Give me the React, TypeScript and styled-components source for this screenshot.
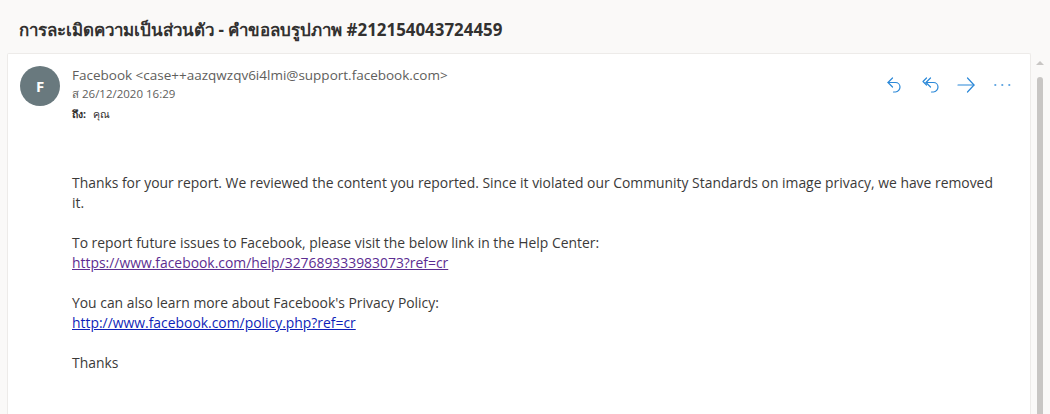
import React from "react";
import styled, { createGlobalStyle } from "styled-components";

const GlobalStyle = createGlobalStyle`
  html, body {
    margin: 0;
    padding: 0;
    height: 414px;
    overflow: hidden;
    background: #faf9f8;
  }
  body {
    font-family: "Open Sans", "Noto Sans", "Liberation Sans", sans-serif;
  }
`;

const Page = styled.div`
  width: 1050px;
  height: 414px;
  display: flex;
  flex-direction: column;
  overflow: hidden;
`;

const SubjectBar = styled.div`
  height: 53px;
  flex: none;
  display: flex;
  align-items: center;
  padding: 7px 0 0 19px;
  box-sizing: border-box;
  font-size: 16.9px;
  font-weight: 700;
  color: #323130;
`;

const Main = styled.div`
  flex: 1;
  display: flex;
  min-height: 0;
  padding-left: 7px;
`;

const Card = styled.div`
  width: 1024px;
  flex: none;
  box-sizing: border-box;
  background: #fff;
  border: 1px solid #edebe9;
  border-bottom: none;
  border-radius: 2px 2px 0 0;
  padding: 12px 0 0 12px;
`;

const Head = styled.div`
  display: flex;
  align-items: flex-start;
`;

const Avatar = styled.div`
  width: 40px;
  height: 40px;
  flex: none;
  border-radius: 50%;
  background: #69797e;
  color: #fff;
  font-size: 15px;
  font-weight: 700;
  display: flex;
  align-items: center;
  justify-content: center;
`;

const Meta = styled.div`
  flex: 1;
  margin-left: 12px;
  margin-top: -1px;
  color: #605e5c;
`;

const Sender = styled.div`
  font-size: 13.5px;
  line-height: 20px;
`;

const DateLine = styled.div`
  font-size: 11.5px;
  line-height: 17px;
`;

const ToLine = styled.div`
  font-size: 10.5px;
  line-height: 24px;
  color: #323130;
  display: flex;
  gap: 7px;
  b {
    font-weight: 700;
  }
`;

const Actions = styled.div`
  display: flex;
  gap: 14px;
  margin: 8px 18px 0 0;
`;

const ActionIcon = styled.svg`
  width: 22px;
  height: 22px;
  fill: none;
  stroke: #2b88d8;
  stroke-width: 1.2;
  stroke-linecap: round;
  stroke-linejoin: round;
`;

const Body = styled.div`
  margin: 47px 29px 0 52px;
  font-size: 13.9px;
  line-height: 20px;
  color: #3b3a39;
`;

const Para = styled.p`
  margin: 0 0 20px;
`;

const MailLink = styled.a<{ $visited?: boolean }>`
  color: ${(p) => (p.$visited ? "#5c2d91" : "#0f1fb8")};
  text-decoration: underline;
`;

const ScrollTrack = styled.div`
  flex: 1;
  display: flex;
  flex-direction: column;
  align-items: center;
  padding-top: 8px;
`;

const ScrollArrow = styled.div`
  width: 0;
  height: 0;
  border-left: 4px solid transparent;
  border-right: 4px solid transparent;
  border-bottom: 4px solid #c8c6c4;
  margin-left: -1px;
`;

const ScrollThumb = styled.div`
  flex: 1;
  width: 6px;
  margin-top: 12px;
  margin-left: -1px;
  background: #c8c6c4;
  border-radius: 3px 3px 0 0;
`;

function ReplyIcon() {
  return (
    <ActionIcon viewBox="0 0 22 22">
      <path d="M10.5 4 L6 8.5 L10.5 13" />
      <path d="M6 8.5 H13.5 C16 8.5 18 10.5 18 13 C18 15.5 16 18 13.5 18 H11.5" />
    </ActionIcon>
  );
}

function ReplyAllIcon() {
  return (
    <ActionIcon viewBox="0 0 22 22">
      <path d="M8.5 4 L5 7.5 L8.5 11" />
      <path d="M12.5 4 L8 8.5 L12.5 13" />
      <path d="M8 8.5 H15.5 C18 8.5 20 10.5 20 13 C20 15.5 18 18 15.5 18 H13.5" />
    </ActionIcon>
  );
}

function ForwardIcon() {
  return (
    <ActionIcon viewBox="0 0 22 22">
      <path d="M4 11 H20" />
      <path d="M13.5 4 L20 11 L13.5 18" />
    </ActionIcon>
  );
}

function MoreIcon() {
  return (
    <ActionIcon viewBox="0 0 22 22">
      <path d="M5 11 h.6 M12 11 h.6 M19 11 h.6" strokeWidth="1.6" />
    </ActionIcon>
  );
}

export default function App() {
  return (
    <>
      <GlobalStyle />
      <Page>
        <SubjectBar>การละเมิดความเป็นส่วนตัว - คำขอลบรูปภาพ #212154043724459</SubjectBar>
        <Main>
          <Card>
            <Head>
              <Avatar>F</Avatar>
              <Meta>
                <Sender>Facebook &lt;case++aazqwzqv6i4lmi@support.facebook.com&gt;</Sender>
                <DateLine>ส 26/12/2020 16:29</DateLine>
                <ToLine>
                  <b>ถึง:</b>
                  <span>คุณ</span>
                </ToLine>
              </Meta>
              <Actions>
                <ReplyIcon />
                <ReplyAllIcon />
                <ForwardIcon />
                <MoreIcon />
              </Actions>
            </Head>
            <Body>
              <Para>
                Thanks for your report. We reviewed the content you reported. Since it violated our Community Standards on image privacy, we have removed it.
              </Para>
              <Para>
                To report future issues to Facebook, please visit the below link in the Help Center:
                <br />
                <MailLink $visited href="#help">https://www.facebook.com/help/327689333983073?ref=cr</MailLink>
              </Para>
              <Para>
                You can also learn more about Facebook's Privacy Policy:
                <br />
                <MailLink href="#policy">http://www.facebook.com/policy.php?ref=cr</MailLink>
              </Para>
              <Para>Thanks</Para>
            </Body>
          </Card>
          <ScrollTrack>
            <ScrollArrow />
            <ScrollThumb />
          </ScrollTrack>
        </Main>
      </Page>
    </>
  );
}
